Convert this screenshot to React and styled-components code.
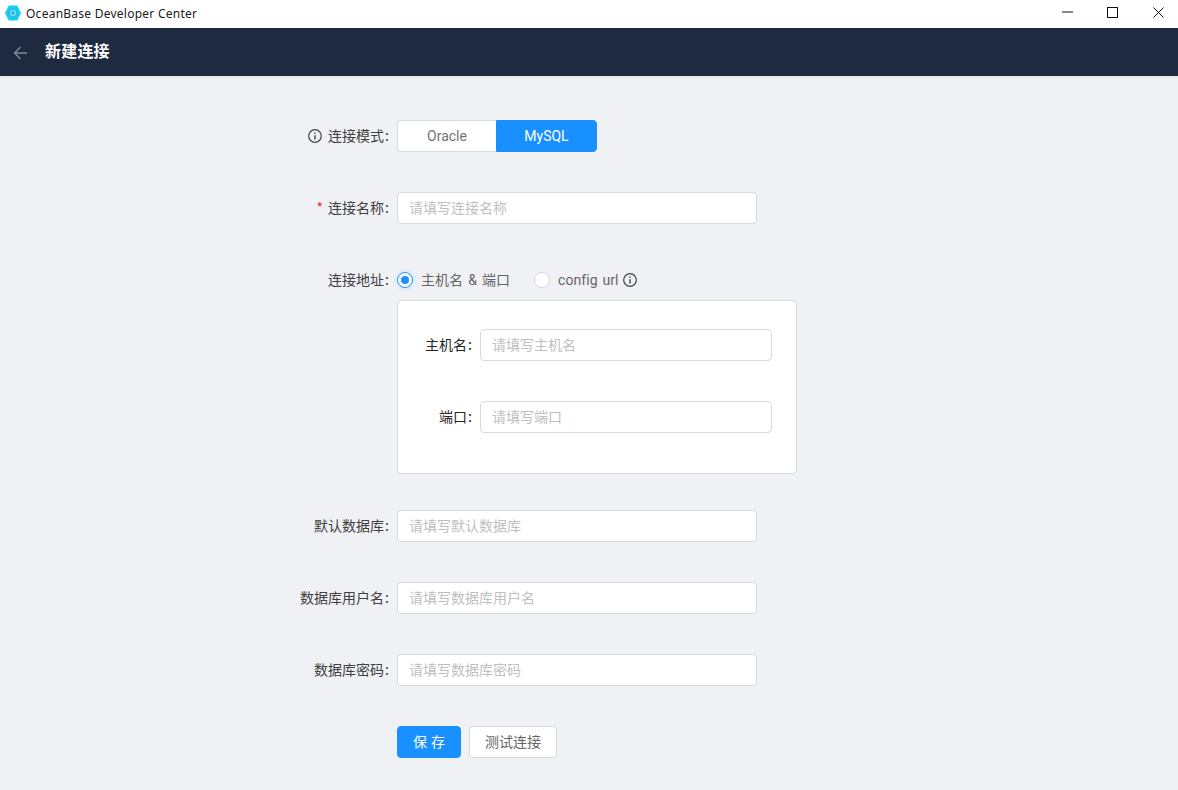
import React from "react";
import styled, { createGlobalStyle } from "styled-components";

const Global = createGlobalStyle`
  html, body { margin: 0; padding: 0; }
  body { background: #eff1f5; font-family: "Roboto", "Noto Sans CJK SC", sans-serif; }
  * { box-sizing: border-box; }
  input::placeholder { color: #bfbfbf; opacity: 1; }
`;

const Page = styled.div`
  width: 1178px;
  height: 790px;
  overflow: hidden;
  display: flex;
  flex-direction: column;
  background: #eff1f5;
`;
const TitleBar = styled.div`
  height: 28px;
  background: #fff;
  display: flex;
  align-items: center;
  padding-left: 5px;
`;
const LogoMark = styled.span`
  display: flex;
  margin-bottom: 3px;
`;
const AppName = styled.span`
  margin-left: 5px;
  font: 12px/26px "Noto Sans", "Open Sans", sans-serif;
  color: #1a1a1a;
  letter-spacing: 0.25px;
`;
const WinButtons = styled.div`
  margin-left: auto;
  display: flex;
  align-items: flex-start;
  gap: 5.5px;
  height: 28px;
`;
const WinButton = styled.span`
  width: 40px;
  height: 24px;
  display: flex;
  align-items: center;
  justify-content: center;
`;
const Header = styled.header`
  height: 48px;
  background: #1d2a3f;
  display: flex;
  align-items: center;
  padding-left: 13px;
  box-shadow: 0 1px 3px rgba(0, 0, 0, 0.08);
`;
const BackIcon = styled.span`
  display: flex;
  margin-top: 2px;
`;
const HeaderTitle = styled.h1`
  margin: 0 0 4px 16px;
  font: 700 16px/24px "Noto Sans CJK SC", sans-serif;
  letter-spacing: 0.2px;
  color: #fff;
`;
const Form = styled.form`
  padding: 44px 0 0 0;
  display: flex;
  flex-direction: column;
  gap: 40px;
`;
const Row = styled.div`
  display: grid;
  grid-template-columns: ${(p) => p.$label || 397}px 1fr;
  align-items: start;
`;
const Label = styled.label`
  height: 32px;
  display: flex;
  align-items: center;
  justify-content: flex-end;
  font: 14px/30px "Noto Sans CJK SC", sans-serif;
  padding-bottom: 2px;
  color: ${(p) => (p.$dark ? "#262626" : "#404040")};
  white-space: nowrap;
  &::after {
    content: ":";
    margin: 0 8px 0 1px;
  }
`;
const LabelIcon = styled.span`
  display: flex;
  margin: 2px 6px 0 0;
`;
const Star = styled.span`
  color: #f5222d;
  font-size: 14px;
  margin-right: 5px;
`;
const Input = styled.input`
  display: block;
  width: ${(p) => p.$w || 360}px;
  height: 32px;
  padding: 0 11px 2px;
  background: #fff;
  border: 1px solid #d9d9d9;
  border-radius: 4px;
  outline: none;
  font: 14px "Noto Sans CJK SC", sans-serif;
  color: #333;
`;
const Segments = styled.div`
  display: flex;
  width: 200px;
  height: 32px;
`;
const Segment = styled.div`
  flex: 0 0 ${(p) => (p.$active ? 101 : 99)}px;
  display: flex;
  align-items: center;
  justify-content: center;
  font: 14px/30px "Roboto", sans-serif;
  color: ${(p) => (p.$active ? "#fff" : "#737373")};
  background: ${(p) => (p.$active ? "#1890ff" : "#fff")};
  border: 1px solid ${(p) => (p.$active ? "#1890ff" : "#d9d9d9")};
  border-right-width: ${(p) => (p.$active ? 1 : 0)}px;
  border-radius: ${(p) => (p.$active ? "0 4px 4px 0" : "4px 0 0 4px")};
`;
const AddressControl = styled.div`
  display: flex;
  flex-direction: column;
  gap: 4px;
  margin-bottom: -4px;
`;
const Radios = styled.div`
  height: 32px;
  display: flex;
  align-items: center;
`;
const RadioItem = styled.span`
  display: inline-flex;
  align-items: center;
  gap: 8px;
  margin-right: 24px;
  font: 14px/30px "Roboto", "Noto Sans CJK SC", sans-serif;
  color: #666;
  word-spacing: 1.5px;
  letter-spacing: 0.05px;
`;
const RadioDot = styled.span`
  width: 16px;
  height: 16px;
  border-radius: 50%;
  background: #fff;
  border: 1px solid ${(p) => (p.$on ? "#1890ff" : "#d9d9d9")};
  display: flex;
  align-items: center;
  justify-content: center;
  box-shadow: ${(p) => (p.$on ? "0 0 0 3px #e3eefb" : "none")};
  &::after {
    content: "";
    display: ${(p) => (p.$on ? "block" : "none")};
    width: 8px;
    height: 8px;
    border-radius: 50%;
    background: #1890ff;
  }
`;
const RadioInfo = styled.span`
  display: flex;
  margin-left: -4px;
`;
const HostBox = styled.div`
  width: 400px;
  height: 174px;
  padding-top: 28px;
  background: #fff;
  border: 1px solid #d9d9d9;
  border-radius: 4px;
  display: flex;
  flex-direction: column;
  gap: 40px;
`;
const Actions = styled.div`
  display: flex;
  gap: 8px;
`;
const Button = styled.button`
  height: 32px;
  padding: 0 0 2px;
  border-radius: 4px;
  border: 1px solid ${(p) => (p.$primary ? "#1890ff" : "#d9d9d9")};
  background: ${(p) => (p.$primary ? "#1890ff" : "#fff")};
  color: ${(p) => (p.$primary ? "#fff" : "#666")};
  font: 14px "Noto Sans CJK SC", sans-serif;
  word-spacing: 1px;
  width: ${(p) => (p.$primary ? 64 : 88)}px;
  white-space: nowrap;
`;

const Info = () => (
  <svg width="14" height="14" viewBox="0 0 14 14" fill="none" stroke="#444" strokeWidth="1.2">
    <circle cx="7" cy="7" r="6.3" />
    <path d="M7 6.2v4.200" strokeWidth="1.4" />
    <path d="M7 3.400v1.400" strokeWidth="1.5" />
  </svg>
);
const Logo = () => (
  <svg width="16" height="16" viewBox="0 0 16 16">
    <path d="M3.800.6h8.400L16 8l-3.800 7.400H3.800L0 8z" fill="#0fd2ee" />
    <circle cx="8" cy="8" r="3.900" fill="#66dff3" stroke="#3fa9ea" strokeWidth="1.300" />
    <circle cx="8" cy="8" r="1.400" fill="#2f9fe6" />
  </svg>
);

const fields = [
  ["默认数据库", "请填写默认数据库"],
  ["数据库用户名", "请填写数据库用户名"],
  ["数据库密码", "请填写数据库密码"],
];

export default function App() {
  return (
    <Page>
      <Global />
      <TitleBar>
        <LogoMark><Logo /></LogoMark>
        <AppName>OceanBase Developer Center</AppName>
        <WinButtons>
          <WinButton>
            <svg width="11" height="2" viewBox="0 0 11 2"><path d="M0 1h11" stroke="#111" strokeWidth="1" /></svg>
          </WinButton>
          <WinButton>
            <svg width="11" height="11" viewBox="0 0 11 11" fill="none"><rect x="0.5" y="0.5" width="10" height="10" stroke="#111" /></svg>
          </WinButton>
          <WinButton>
            <svg width="11" height="11" viewBox="0 0 11 11" fill="none"><path d="M.5.5l10 10M10.500.5l-10 10" stroke="#111" /></svg>
          </WinButton>
        </WinButtons>
      </TitleBar>
      <Header>
        <BackIcon>
          <svg width="16" height="16" viewBox="0 0 16 16" fill="none" stroke="#838b98" strokeWidth="1.3">
            <path d="M14 8H1.500M7.500 2 1.500 8l6 6" />
          </svg>
        </BackIcon>
        <HeaderTitle>新建连接</HeaderTitle>
      </Header>
      <Form>
        <Row>
          <Label><LabelIcon><Info /></LabelIcon>连接模式</Label>
          <Segments>
            <Segment>Oracle</Segment>
            <Segment $active>MySQL</Segment>
          </Segments>
        </Row>
        <Row>
          <Label><Star>*</Star>连接名称</Label>
          <Input placeholder="请填写连接名称" />
        </Row>
        <Row>
          <Label>连接地址</Label>
          <AddressControl>
            <Radios>
              <RadioItem><RadioDot $on />主机名 &amp; 端口</RadioItem>
              <RadioItem><RadioDot />config url<RadioInfo><Info /></RadioInfo></RadioItem>
            </Radios>
            <HostBox>
              <Row $label={82}>
                <Label $dark>主机名</Label>
                <Input $w={292} placeholder="请填写主机名" />
              </Row>
              <Row $label={82}>
                <Label $dark>端口</Label>
                <Input $w={292} placeholder="请填写端口" />
              </Row>
            </HostBox>
          </AddressControl>
        </Row>
        {fields.map(([label, ph]) => (
          <Row key={label}>
            <Label>{label}</Label>
            <Input placeholder={ph} />
          </Row>
        ))}
        <Row>
          <span />
          <Actions>
            <Button $primary type="button">保 存</Button>
            <Button type="button">测试连接</Button>
          </Actions>
        </Row>
      </Form>
    </Page>
  );
}
